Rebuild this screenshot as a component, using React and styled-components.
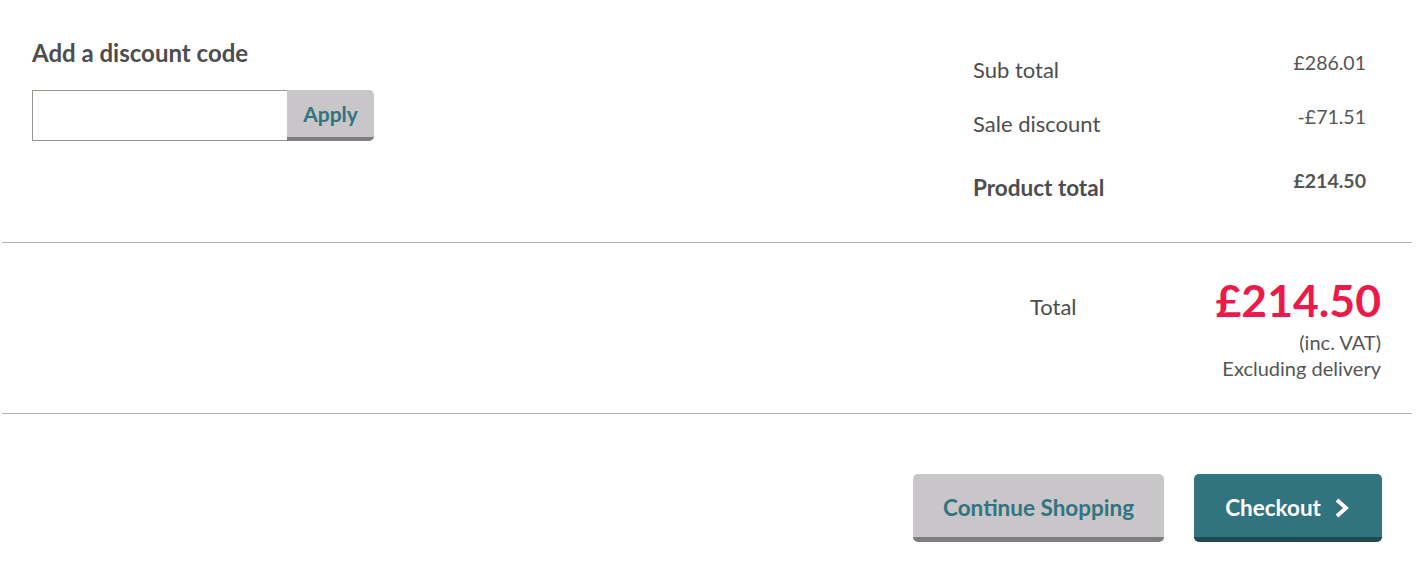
import styled, { createGlobalStyle } from "styled-components";

const GlobalStyle = createGlobalStyle`
  body {
    margin: 0;
    background: #fff;
    font-family: Lato, "Open Sans", sans-serif;
    color: #4a4a4a;
  }
`;

const summaryRows = [
  { label: "Sub total", value: "£286.01" },
  { label: "Sale discount", value: "-£71.51" },
];

export default function App() {
  return (
    <>
      <GlobalStyle />
      <StyledPage>
        <StyledTop>
          <StyledDiscount>
            <StyledHeading>Add a discount code</StyledHeading>
            <StyledForm onSubmit={(e) => e.preventDefault()}>
              <StyledInput type="text" aria-label="Discount code" />
              <StyledApply type="submit">Apply</StyledApply>
            </StyledForm>
          </StyledDiscount>

          <StyledSummary>
            {summaryRows.map(({ label, value }) => (
              <StyledRow key={label}>
                <StyledLabel>{label}</StyledLabel>
                <StyledValue>{value}</StyledValue>
              </StyledRow>
            ))}
            <StyledRow $strong>
              <StyledLabel $strong>Product total</StyledLabel>
              <StyledValue $strong>£214.50</StyledValue>
            </StyledRow>
          </StyledSummary>
        </StyledTop>

        <StyledTotal>
          <StyledTotalLabel>Total</StyledTotalLabel>
          <StyledTotalInfo>
            <StyledAmount>£214.50</StyledAmount>
            <StyledNote>(inc. VAT)</StyledNote>
            <StyledNote>Excluding delivery</StyledNote>
          </StyledTotalInfo>
        </StyledTotal>

        <StyledActions>
          <StyledButton type="button">Continue Shopping</StyledButton>
          <StyledButton type="button" $primary>
            Checkout
            <svg width="17" height="20" viewBox="0 0 17 20" aria-hidden="true">
              <path d="M4 2 L13 10 L4 18" fill="none" stroke="#fff" strokeWidth="3.8" strokeLinejoin="miter" />
            </svg>
          </StyledButton>
        </StyledActions>
      </StyledPage>
    </>
  );
}

//

const StyledPage = styled.div`
  width: 1410px;
  margin-left: 2px;
`;

const StyledTop = styled.section`
  display: flex;
  justify-content: space-between;
  align-items: flex-start;
  box-sizing: border-box;
  height: 243px;
  padding: 39px 46px 0 30px;
  border-bottom: 1px solid #b4b4b4;
`;

const StyledDiscount = styled.div`
  display: flex;
  flex-direction: column;
`;

const StyledHeading = styled.h2`
  margin: 0 0 23px;
  font-size: 24px;
  line-height: 28px;
  font-weight: 700;
  color: #4d4d4d;
`;

const StyledForm = styled.form`
  display: flex;
  align-items: flex-start;
`;

const StyledInput = styled.input`
  box-sizing: border-box;
  width: 255px;
  height: 51px;
  margin: 0;
  border: 1px solid #999690;
  border-right: none;
  padding: 0 12px;
  font: inherit;
  outline: none;
`;

const StyledApply = styled.button`
  box-sizing: border-box;
  width: 87px;
  height: 51px;
  margin: 0;
  padding: 0;
  border: none;
  border-bottom: 4px solid #7f7d80;
  border-radius: 0 5px 5px 0;
  background: #c8c6c9;
  font-family: Lato, sans-serif;
  font-size: 21px;
  font-weight: 700;
  color: #317480;
  cursor: pointer;
`;

const StyledSummary = styled.div`
  width: 393px;
  padding-top: 12px;
`;

const StyledRow = styled.div`
  display: flex;
  justify-content: space-between;
  align-items: flex-start;
  height: ${({ $strong }) => ($strong ? "32px" : "54px")};
  margin-top: ${({ $strong }) => ($strong ? "10px" : "0")};
`;

const StyledLabel = styled.span`
  padding-top: 6px;
  font-size: ${({ $strong }) => ($strong ? "22.5px" : "22px")};
  line-height: 26px;
  font-weight: ${({ $strong }) => ($strong ? 700 : 400)};
  color: #4d4d4d;
`;

const StyledValue = styled.span`
  font-size: 19.5px;
  line-height: 24px;
  font-weight: ${({ $strong }) => ($strong ? 700 : 400)};
  color: #555;
`;

const StyledTotal = styled.section`
  display: flex;
  justify-content: flex-end;
  align-items: flex-start;
  gap: 139px;
  box-sizing: border-box;
  height: 171px;
  padding: 33px 31px 0 0;
  border-bottom: 1px solid #b4b4b4;
`;

const StyledTotalLabel = styled.span`
  margin-top: 18px;
  font-size: 22px;
  line-height: 26px;
  color: #4d4d4d;
`;

const StyledTotalInfo = styled.div`
  display: flex;
  flex-direction: column;
  align-items: flex-end;
`;

const StyledAmount = styled.span`
  font-size: 44.5px;
  line-height: 48px;
  font-weight: 700;
  color: #ec1a4b;
  margin-bottom: 5px;
`;

const StyledNote = styled.span`
  font-size: 20px;
  line-height: 26px;
  color: #555;
`;

const StyledActions = styled.section`
  display: flex;
  justify-content: flex-end;
  gap: 30px;
  padding: 60px 30px 0 0;
`;

const StyledButton = styled.button`
  display: flex;
  align-items: center;
  justify-content: center;
  gap: 12px;
  box-sizing: border-box;
  height: 68px;
  padding: ${({ $primary }) => ($primary ? "4px 32px 0 31px" : "4px 30px 0")};
  margin: 0;
  border: none;
  border-bottom: 5px solid ${({ $primary }) => ($primary ? "#1f4a50" : "#7f7d80")};
  border-radius: 5px;
  background: ${({ $primary }) => ($primary ? "#317480" : "#c8c6c9")};
  font-family: Lato, sans-serif;
  font-size: 22.5px;
  font-weight: 700;
  color: ${({ $primary }) => ($primary ? "#fff" : "#317480")};
  cursor: pointer;
`;
